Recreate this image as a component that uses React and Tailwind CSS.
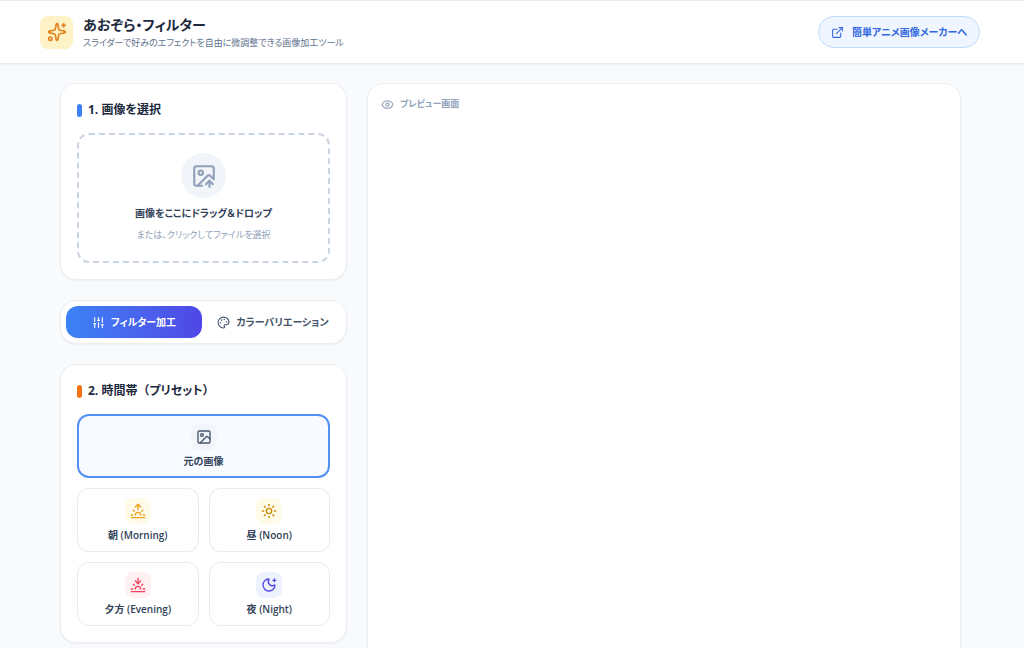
import { useState } from "react";
import {
  Sparkles, ExternalLink, ImageUp, SlidersVertical, Palette,
  Image, Sunrise, Sun, Sunset, MoonStar, Eye,
} from "lucide-react";

const presets = [
  { id: "original", label: "元の画像", icon: Image, tone: "bg-slate-100 text-slate-600", wide: true },
  { id: "morning", label: "朝 (Morning)", icon: Sunrise, tone: "bg-amber-50 text-[#f0a020]" },
  { id: "noon", label: "昼 (Noon)", icon: Sun, tone: "bg-yellow-50 text-[#ca8a04]" },
  { id: "evening", label: "夕方 (Evening)", icon: Sunset, tone: "bg-rose-50 text-[#f43f5e]" },
  { id: "night", label: "夜 (Night)", icon: MoonStar, tone: "bg-indigo-50 text-[#4f46e5]" },
];

const tabs = [
  { id: "filter", label: "フィルター加工", icon: SlidersVertical },
  { id: "color", label: "カラーバリエーション", icon: Palette },
];

function Card({ className = "", children }) {
  return (
    <section className={`rounded-2xl border border-slate-200/70 bg-white shadow-xs ${className}`}>
      {children}
    </section>
  );
}

function Heading({ bar, children }) {
  return (
    <h2 className="mb-[13px] flex items-center gap-1.5 text-xs leading-5 font-bold text-slate-800">
      <span className={`h-[13px] w-[5px] rounded-full ${bar}`} />
      <span>{children}</span>
    </h2>
  );
}

export default function App() {
  const [preset, setPreset] = useState("original");
  const [tab, setTab] = useState("filter");

  return (
    <div className="flex h-screen flex-col overflow-hidden bg-slate-50 font-['Open_Sans','Noto_Sans_CJK_JP',sans-serif] text-slate-800 [font-feature-settings:'palt']">
      <header className="flex h-16 shrink-0 items-center justify-between border-t border-b border-slate-200/80 bg-white pr-11 pl-10 shadow-xs">
        <div className="flex items-center gap-2.5">
          <span className="flex size-[33px] items-center justify-center rounded-lg bg-amber-100 text-[#e08320]">
            <Sparkles size={20} />
          </span>
          <div className="pt-0.5">
            <h1 className="text-sm leading-5 font-bold">あおぞら・フィルター</h1>
            <p className="text-[9px] leading-4 text-slate-500">スライダーで好みのエフェクトを自由に微調整できる画像加工ツール</p>
          </div>
        </div>
        <a href="#maker" className="flex h-8 items-center gap-2 rounded-full border border-[#bfdbfe] bg-[#eff6ff] px-3 text-[10px] font-bold text-[#3468e0]">
          <ExternalLink size={13} />
          簡単アニメ画像メーカーへ
        </a>
      </header>

      <main className="grid min-h-0 flex-1 grid-cols-[287px_1fr] items-start gap-5 pt-[19px] pr-[63px] pl-[60px]">
        <div className="flex flex-col gap-5">
          <Card className="p-4">
            <Heading bar="bg-[#3b82f6]">1. 画像を選択</Heading>
            <label className="flex cursor-pointer flex-col items-center rounded-xl border-2 border-dashed border-slate-300 py-[18px]">
              <input type="file" accept="image/*" className="sr-only" />
              <span className="mb-[5px] flex size-[45px] items-center justify-center rounded-full bg-slate-100 text-slate-400">
                <ImageUp size={26} />
              </span>
              <span className="mb-1 text-[10px] leading-5 font-bold text-slate-700">画像をここにドラッグ＆ドロップ</span>
              <span className="text-[9px] leading-4 text-slate-400">または、クリックしてファイルを選択</span>
            </label>
          </Card>

          <Card className="grid grid-cols-2 gap-[3px] p-[5px]">
            {tabs.map(({ id, label, icon: Icon }) => (
              <button
                key={id}
                type="button"
                aria-pressed={tab === id}
                onClick={() => setTab(id)}
                className={`flex h-8 items-center justify-center gap-1.5 rounded-xl text-[10px] font-bold whitespace-nowrap ${
                  tab === id ? "bg-linear-to-r from-[#3b82f6] to-[#4f46e5] text-white shadow-xs" : "text-slate-600"
                }`}
              >
                <Icon size={13} />
                {label}
              </button>
            ))}
          </Card>

          <Card className="p-4">
            <Heading bar="bg-[#f97316]">
              2. 時間帯<span className="[font-feature-settings:normal]">（</span>プリセット
              <span className="[font-feature-settings:normal]">）</span>
            </Heading>
            <div className="grid grid-cols-2 gap-2.5">
              {presets.map(({ id, label, icon: Icon, tone, wide }) => (
                <button
                  key={id}
                  type="button"
                  aria-pressed={preset === id}
                  onClick={() => setPreset(id)}
                  className={`flex h-16 flex-col items-center justify-center gap-[3px] rounded-xl ${wide ? "col-span-2" : ""} ${
                    preset === id ? "border-2 border-[#5290f5] bg-[#f7fbff]" : "border border-slate-200/80 bg-white"
                  }`}
                >
                  <span className={`flex size-[26px] items-center justify-center rounded-lg ${tone}`}>
                    <Icon size={16} />
                  </span>
                  <span className="text-[10px] leading-4 font-semibold text-slate-700">{label}</span>
                </button>
              ))}
            </div>
          </Card>
        </div>

        <Card className="min-h-[640px] px-[13px] py-3">
          <h2 className="flex items-center gap-1.5 text-[9px] leading-4 font-bold text-slate-400">
            <Eye size={13} />
            プレビュー画面
          </h2>
        </Card>
      </main>
    </div>
  );
}
